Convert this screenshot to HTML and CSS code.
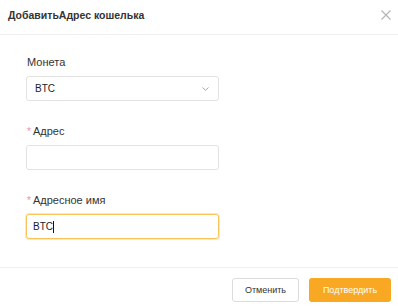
FILE: index.html
```html
<!DOCTYPE html>
<html lang="ru">
<head>
<meta charset="utf-8">
<link rel="stylesheet" href="styles.css">
</head>
<body>
<div class="modal">
  <div class="header">
    <div class="title">ДобавитьАдрес кошелька</div>
    <svg class="close" width="10" height="10" viewBox="0 0 10 10"><path d="M0.5 0.5L9.5 9.5M9.5 0.5L0.5 9.5" stroke="#b3b3b3" stroke-width="1.1" fill="none"/></svg>
  </div>
  <div class="body">
    <div class="field">
      <div class="label">Монета</div>
      <div class="box select">
        <span class="val">BTC</span>
        <svg class="chev" width="7" height="4" viewBox="0 0 7 4"><path d="M0.5 0.5L3.5 3.3L6.5 0.5" stroke="#a6a6a6" stroke-width="1" fill="none"/></svg>
      </div>
    </div>
    <div class="field">
      <div class="label"><span class="req">*</span>Адрес</div>
      <div class="box input"></div>
    </div>
    <div class="field">
      <div class="label"><span class="req">*</span>Адресное имя</div>
      <div class="box input focus"><span class="val">BTC</span><span class="caret"></span></div>
    </div>
  </div>
  <div class="footer">
    <div class="btn cancel">Отменить</div>
    <div class="btn ok">Подтвердить</div>
  </div>
</div>
</body>
</html>
```
FILE: styles.css
```css
html, body {
  margin: 0;
  padding: 0;
  background: #fff;
}
body {
  font-family: "Liberation Sans", Arial, sans-serif;
  color: #333;
}
.modal {
  width: 398px;
  height: 306px;
  display: flex;
  flex-direction: column;
  box-sizing: border-box;
}
.header {
  height: 35px;
  box-sizing: border-box;
  border-bottom: 1px solid #efefef;
  display: flex;
  align-items: center;
  justify-content: space-between;
  padding: 0 7px 4px 8px;
}
.title {
  font-size: 10.5px;
  font-weight: bold;
  color: #333;
}
.close {
  display: block;
  margin-top: -1px;
}
.body {
  flex: 1;
  padding: 19px 0 0 26px;
  display: flex;
  flex-direction: column;
  gap: 22px;
}
.field {
  display: flex;
  flex-direction: column;
  gap: 6px;
}
.label {
  height: 16px;
  line-height: 16px;
  font-size: 11px;
  color: #333;
  padding-left: 1px;
  display: flex;
  align-items: center;
}
.req {
  color: #f58ea5;
  font-size: 10px;
  margin-right: 2px;
  margin-top: 2px;
}
.box {
  width: 193px;
  height: 25px;
  box-sizing: border-box;
  border: 1px solid #e2e2e2;
  border-radius: 3px;
  display: flex;
  align-items: center;
  font-size: 10px;
  color: #222;
}
.select {
  padding: 0 9px 0 8px;
  justify-content: space-between;
}
.input {
  padding: 0 6px;
}
.focus {
  border-color: #f9c35a;
  box-shadow: 0 0 0 1px rgba(250, 190, 80, 0.35);
}
.caret {
  display: inline-block;
  width: 1px;
  height: 12px;
  background: #111;
  margin-left: 0;
}
.footer {
  height: 39px;
  box-sizing: border-box;
  border-top: 1px solid #efefef;
  display: flex;
  justify-content: flex-end;
  align-items: flex-start;
  gap: 10px;
  padding: 10px 7px 0 0;
}
.btn {
  height: 24px;
  box-sizing: border-box;
  border-radius: 3px;
  display: flex;
  align-items: center;
  justify-content: center;
  font-size: 9px;
}
.cancel {
  width: 67px;
  border: 1px solid #dcdcdc;
  color: #333;
  background: #fff;
}
.ok {
  width: 82px;
  background: #f8a822;
  color: #fff;
}
```
